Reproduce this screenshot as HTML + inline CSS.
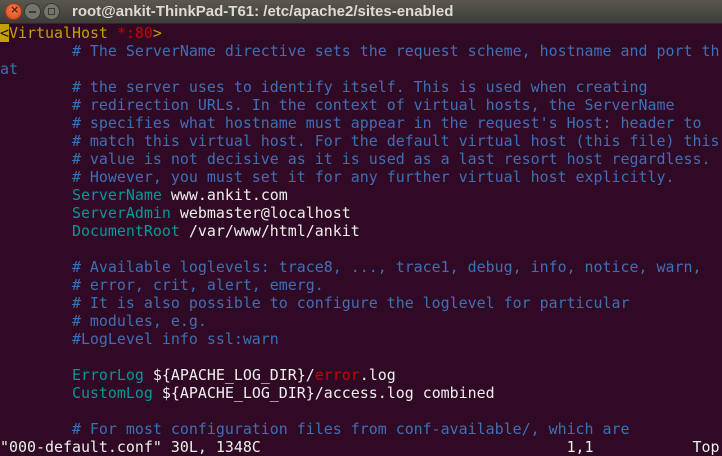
<!DOCTYPE html>
<html><head><meta charset="utf-8"><style>
html,body{margin:0;padding:0;width:722px;height:454px;overflow:hidden;background:#300a24}
#tb{position:absolute;left:0;top:0;width:722px;height:24px;background:linear-gradient(#59574f,#3d3c37);border-bottom:1px solid #2b2a27;box-sizing:border-box}
.b{position:absolute;top:3px;width:17px;height:17px;border-radius:50%;box-sizing:border-box}
#t{position:absolute;left:72px;top:3px;font:bold 15px "Liberation Sans","DejaVu Sans",sans-serif;color:#dfdbd2;white-space:nowrap}
#term{position:absolute;left:0;top:24px;width:722px;font-family:"DejaVu Sans Mono","Liberation Mono",monospace;font-size:14.95px;color:#eeeeec}
.l{height:18px;line-height:18px;white-space:pre;overflow:hidden}
.c{color:#3f6fb5}.k{color:#06989a}.y{color:#c4a000}.r{color:#cc0000}
.cur{background:#c4a000;color:#300a24}
</style></head><body>
<div id="tb">
<div class="b" style="left:5px;background:radial-gradient(circle at 50% 40%,#f27b4f,#dc4a1e);border:1px solid #9e3a18"><span style="position:absolute;left:4px;top:-1px;font:bold 11px 'DejaVu Sans',sans-serif;color:#5a1a08">×</span></div>
<div class="b" style="left:24px;background:#76746d;border:1px solid #3a3934"><div style="position:absolute;left:4px;top:7px;width:7px;height:2px;background:#3a3934"></div></div>
<div class="b" style="left:43px;background:#76746d;border:1px solid #3a3934"><div style="position:absolute;left:4px;top:4px;width:5px;height:5px;border:1.5px solid #3a3934"></div></div>
<div id="t">root@ankit-ThinkPad-T61: /etc/apache2/sites-enabled</div>
</div>
<div id="term"><div class="l"><span class="cur">&lt;</span><span class="y">VirtualHost</span> <span class="r">*:80</span><span class="y">&gt;</span></div><div class="l c">        # The ServerName directive sets the request scheme, hostname and port th</div><div class="l c">at</div><div class="l c">        # the server uses to identify itself. This is used when creating</div><div class="l c">        # redirection URLs. In the context of virtual hosts, the ServerName</div><div class="l c">        # specifies what hostname must appear in the request's Host: header to</div><div class="l c">        # match this virtual host. For the default virtual host (this file) this</div><div class="l c">        # value is not decisive as it is used as a last resort host regardless.</div><div class="l c">        # However, you must set it for any further virtual host explicitly.</div><div class="l">        <span class="k">ServerName</span> www.ankit.com</div><div class="l">        <span class="k">ServerAdmin</span> webmaster@localhost</div><div class="l">        <span class="k">DocumentRoot</span> /var/www/html/ankit</div><div class="l"> </div><div class="l c">        # Available loglevels: trace8, ..., trace1, debug, info, notice, warn,</div><div class="l c">        # error, crit, alert, emerg.</div><div class="l c">        # It is also possible to configure the loglevel for particular</div><div class="l c">        # modules, e.g.</div><div class="l c">        #LogLevel info ssl:warn</div><div class="l"> </div><div class="l">        <span class="k">ErrorLog</span> ${APACHE_LOG_DIR}/<span class="r">error</span>.log</div><div class="l">        <span class="k">CustomLog</span> ${APACHE_LOG_DIR}/access.log combined</div><div class="l"> </div><div class="l c">        # For most configuration files from conf-available/, which are</div><div class="l">"000-default.conf" 30L, 1348C                                  1,1           Top</div></div>
</body></html>
